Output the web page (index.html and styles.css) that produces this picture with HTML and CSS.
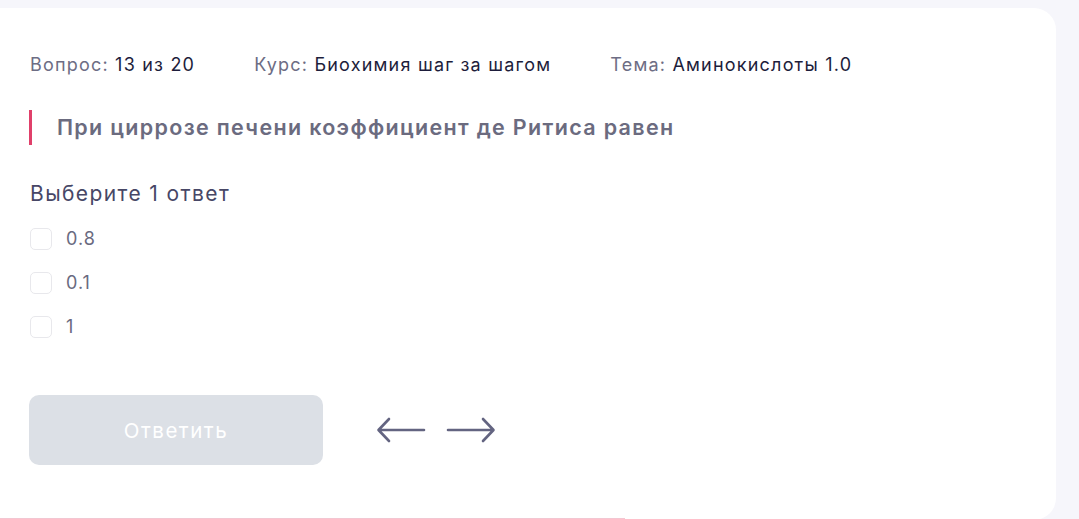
FILE: index.html
```html
<!DOCTYPE html>
<html lang="ru">
<head>
<meta charset="utf-8">
<link rel="stylesheet" href="styles.css">
</head>
<body>
<main class="card">
  <div class="meta">
    <span class="meta-item"><span class="meta-label">Вопрос:</span> 13 из 20</span>
    <span class="meta-item"><span class="meta-label">Курс:</span> Биохимия шаг за шагом</span>
    <span class="meta-item"><span class="meta-label">Тема:</span> Аминокислоты 1.0</span>
  </div>
  <h1 class="question">При циррозе печени коэффициент де Ритиса равен</h1>
  <p class="hint">Выберите 1 ответ</p>
  <ul class="options">
    <li class="option"><span class="box"></span><span class="opt-text">0.8</span></li>
    <li class="option"><span class="box"></span><span class="opt-text">0.1</span></li>
    <li class="option"><span class="box"></span><span class="opt-text">1</span></li>
  </ul>
  <div class="actions">
    <button class="submit" disabled>Ответить</button>
    <div class="nav">
      <svg class="arrow" width="50" height="28" viewBox="0 0 50 28"><path d="M48 14H3M13 3L2.5 14L13 25" fill="none" stroke="#636481" stroke-width="2.6" stroke-linecap="round" stroke-linejoin="round"/></svg>
      <svg class="arrow" width="50" height="28" viewBox="0 0 50 28"><path d="M2 14H47M37 3L47.5 14L37 25" fill="none" stroke="#636481" stroke-width="2.6" stroke-linecap="round" stroke-linejoin="round"/></svg>
    </div>
  </div>
  <div class="progress"><div class="progress-bar" style="width:646px"></div></div>
</main>
</body>
</html>
```
FILE: styles.css
```css
html, body {
  margin: 0;
  padding: 0;
  background: #f6f6fb;
  height: 519px;
  overflow: hidden;
}
body {
  font-family: Inter, "Noto Sans", sans-serif;
  padding-top: 8px;
}
.card {
  background: #ffffff;
  margin-left: -21px;
  width: 1077px;
  height: 512px;
  border-radius: 22px;
  box-sizing: border-box;
  padding: 45px 0 0 51px;
  position: relative;
  overflow: hidden;
}
.meta {
  display: flex;
  gap: 59px;
  font-size: 18px;
  line-height: 24px;
  color: #1d1d3b;
  letter-spacing: 1.2px;
}
.meta-label {
  color: #6d6d84;
}
.question {
  margin: 33px 0 0 -1px;
  border-left: 3px solid #e0406a;
  padding: 4px 0 5px 25px;
  font-size: 21.5px;
  line-height: 26px;
  font-weight: 600;
  color: #6b6b7f;
  letter-spacing: 1.32px;
}
.hint {
  margin: 35px 0 0;
  font-size: 21px;
  line-height: 28px;
  color: #474766;
  letter-spacing: 1.4px;
}
.options {
  list-style: none;
  margin: 19px 0 0;
  padding: 0;
  display: flex;
  flex-direction: column;
  gap: 21px;
}
.option {
  display: flex;
  align-items: center;
  gap: 14px;
  height: 23px;
}
.box {
  width: 20px;
  height: 20px;
  border: 1.5px solid #e8e8ec;
  border-radius: 5px;
}
.opt-text {
  font-size: 18px;
  color: #6a6a80;
  letter-spacing: 1px;
}
.actions {
  display: flex;
  align-items: center;
  gap: 53px;
  margin-top: 57px;
}
.submit {
  width: 294px;
  height: 70px;
  margin-left: -1px;
  border: none;
  border-radius: 10px;
  background: #dce0e6;
  color: #ffffff;
  font-family: Inter, "Noto Sans", sans-serif;
  font-size: 20.5px;
  letter-spacing: 1.5px;
}
.nav {
  display: flex;
  gap: 20px;
}
.arrow {
  display: block;
}
.progress {
  position: absolute;
  left: 0;
  bottom: 0;
  height: 2px;
  width: 100%;
}
.progress-bar {
  height: 2px;
  background: #f3c6d1;
}
```
